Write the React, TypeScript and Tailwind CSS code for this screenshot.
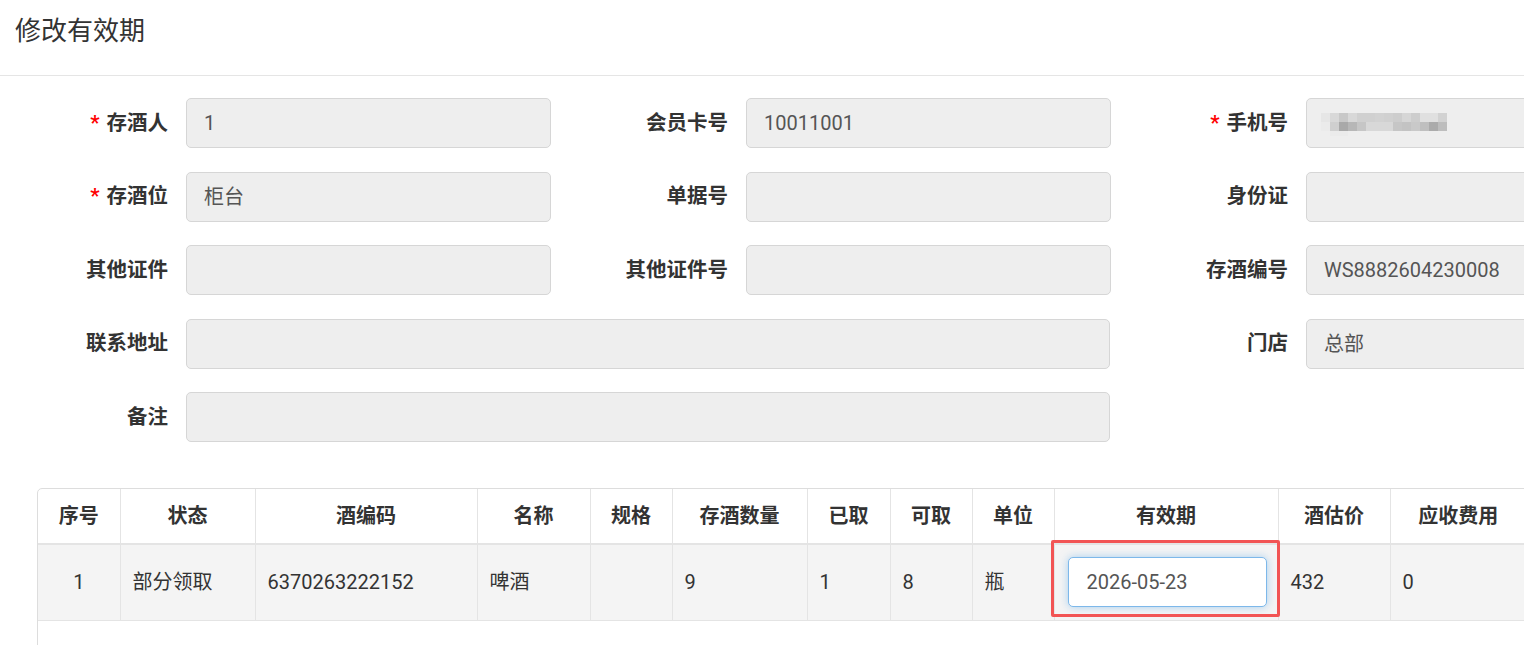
import React from 'react';

interface Field {
  label: string;
  value?: string;
  required?: boolean;
  wide?: boolean;
  masked?: boolean;
}

const fields: Field[] = [
  { label: '存酒人', value: '1', required: true },
  { label: '会员卡号', value: '10011001' },
  { label: '手机号', required: true, masked: true },
  { label: '存酒位', value: '柜台', required: true },
  { label: '单据号' },
  { label: '身份证' },
  { label: '其他证件' },
  { label: '其他证件号' },
  { label: '存酒编号', value: 'WS8882604230008' },
  { label: '联系地址', wide: true },
  { label: '门店', value: '总部' },
  { label: '备注', wide: true },
];

// pixelated phone number (privacy mosaic)
const mosaicTop = ['bg-[#e6e6e6]', 'bg-[#d8d8d8]', 'bg-[#c8c8c8]', 'bg-[#d8d8d8]', 'bg-[#d0d0d0]', 'bg-[#d0d0d0]', 'bg-[#d2d2d2]', 'bg-[#d0d0d0]', 'bg-[#cdcdcd]', 'bg-[#d6d6d6]', 'bg-[#cdcdcd]', 'bg-[#e0e0e0]', 'bg-[#e0e0e0]', 'bg-[#d2d2d2]'];
const mosaicBottom = ['bg-[#ebebeb]', 'bg-[#cfcfcf]', 'bg-[#a9a9a9]', 'bg-[#b7b7b7]', 'bg-[#c6c6c6]', 'bg-[#d8d8d8]', 'bg-[#d8d8d8]', 'bg-[#d8d8d8]', 'bg-[#c6c6c6]', 'bg-[#c3c3c3]', 'bg-[#c9c9c9]', 'bg-[#bfbfbf]', 'bg-[#ababab]', 'bg-[#bdbdbd]'];

function MaskedPhone() {
  return (
    <div className="flex flex-col ml-[-3px] pt-[2px]">
      <div className="flex">
        {mosaicTop.map((c, i) => (
          <span key={i} className={`w-[9px] h-[9px] ${c}`} />
        ))}
      </div>
      <div className="flex">
        {mosaicBottom.map((c, i) => (
          <span key={i} className={`w-[9px] h-[9px] ${c}`} />
        ))}
      </div>
      <div className="flex pl-[9px]">
        <span className="w-[18px] h-[5px] bg-[#ebebeb]" />
      </div>
    </div>
  );
}

function FormField({ field }: { field: Field }) {
  return (
    <div className={`flex items-center ${field.wide ? 'col-span-2' : ''}`}>
      <label className="w-[168px] shrink-0 text-right text-[20.5px] font-bold text-[#333]">
        {field.required && <span className="text-[#f00] mr-[7px]">*</span>}
        {field.label}
      </label>
      <div
        className={`ml-[18px] h-[50px] shrink-0 flex items-center px-[17px] bg-[#eeeeee] border border-[#d6d6d6] rounded-[5px] text-[20px] text-[#555] ${
          field.wide ? 'w-[924px]' : 'w-[365px]'
        }`}
      >
        {field.masked ? <MaskedPhone /> : field.value}
      </div>
    </div>
  );
}

const columns = [
  { title: '序号', w: 'w-[82px]' },
  { title: '状态', w: 'w-[135px]' },
  { title: '酒编码', w: 'w-[222px]' },
  { title: '名称', w: 'w-[113px]' },
  { title: '规格', w: 'w-[82px]' },
  { title: '存酒数量', w: 'w-[135px]' },
  { title: '已取', w: 'w-[83px]' },
  { title: '可取', w: 'w-[82px]' },
  { title: '单位', w: 'w-[82px]' },
  { title: '有效期', w: 'w-[224px]' },
  { title: '酒估价', w: 'w-[112px]' },
  { title: '应收费用', w: 'w-[136px]' },
];

export default function App() {
  return (
    <div className="w-[1524px] h-[645px] overflow-hidden bg-white [font-family:Roboto,'Noto_Sans_CJK_SC',sans-serif]">
      <div className="h-[76px] border-b border-[#e5e5e5] pl-[15px] pt-[15px]">
        <h1 className="text-[26px] leading-[32px] text-[#333]">修改有效期</h1>
      </div>

      <div className="grid grid-cols-[560px_560px_560px] gap-y-[23.5px] pt-[22px]">
        {fields.map((f) => (
          <FormField key={f.label} field={f} />
        ))}
      </div>

      <div className="ml-[37px] mt-[46px] w-[1520px] h-[200px] border border-[#dddddd] rounded-[5px]">
        <table className="table-fixed border-collapse text-[20px] text-[#333]">
          <colgroup>
            {columns.map((c) => (
              <col key={c.title} className={c.w} />
            ))}
          </colgroup>
          <thead>
            <tr className="h-[55px]">
              {columns.map((c, i) => (
                <th
                  key={c.title}
                  className={`font-bold text-center border-b-2 border-[#e4e4e4] ${i > 0 ? 'border-l' : ''}`}
                >
                  {c.title}
                </th>
              ))}
            </tr>
          </thead>
          <tbody>
            <tr className="h-[76px] bg-[#f4f4f4] border-b border-[#e4e4e4]">
              <td className="text-center">1</td>
              <td className="border-l border-[#e4e4e4] px-[12px]">部分领取</td>
              <td className="border-l border-[#e4e4e4] px-[12px]">6370263222152</td>
              <td className="border-l border-[#e4e4e4] px-[12px]">啤酒</td>
              <td className="border-l border-[#e4e4e4] px-[12px]"></td>
              <td className="border-l border-[#e4e4e4] px-[12px]">9</td>
              <td className="border-l border-[#e4e4e4] px-[12px]">1</td>
              <td className="border-l border-[#e4e4e4] px-[12px]">8</td>
              <td className="border-l border-[#e4e4e4] px-[12px]">瓶</td>
              <td className="relative border-l border-[#e4e4e4] pl-[13px]">
                <input
                  readOnly
                  value="2026-05-23"
                  className="w-[199px] h-[50px] px-[18px] bg-white text-[#555] border border-[#7db8ea] rounded-[5px] shadow-[0_0_8px_rgba(102,175,233,0.55)] outline-none"
                />
                <span className="absolute left-[-4px] top-[-5px] w-[229px] h-[77px] border-[3px] border-[#f25454] rounded-[2px] pointer-events-none" />
              </td>
              <td className="border-l border-[#e4e4e4] px-[12px]">432</td>
              <td className="border-l border-[#e4e4e4] px-[12px]">0</td>
            </tr>
          </tbody>
        </table>
      </div>
    </div>
  );
}
